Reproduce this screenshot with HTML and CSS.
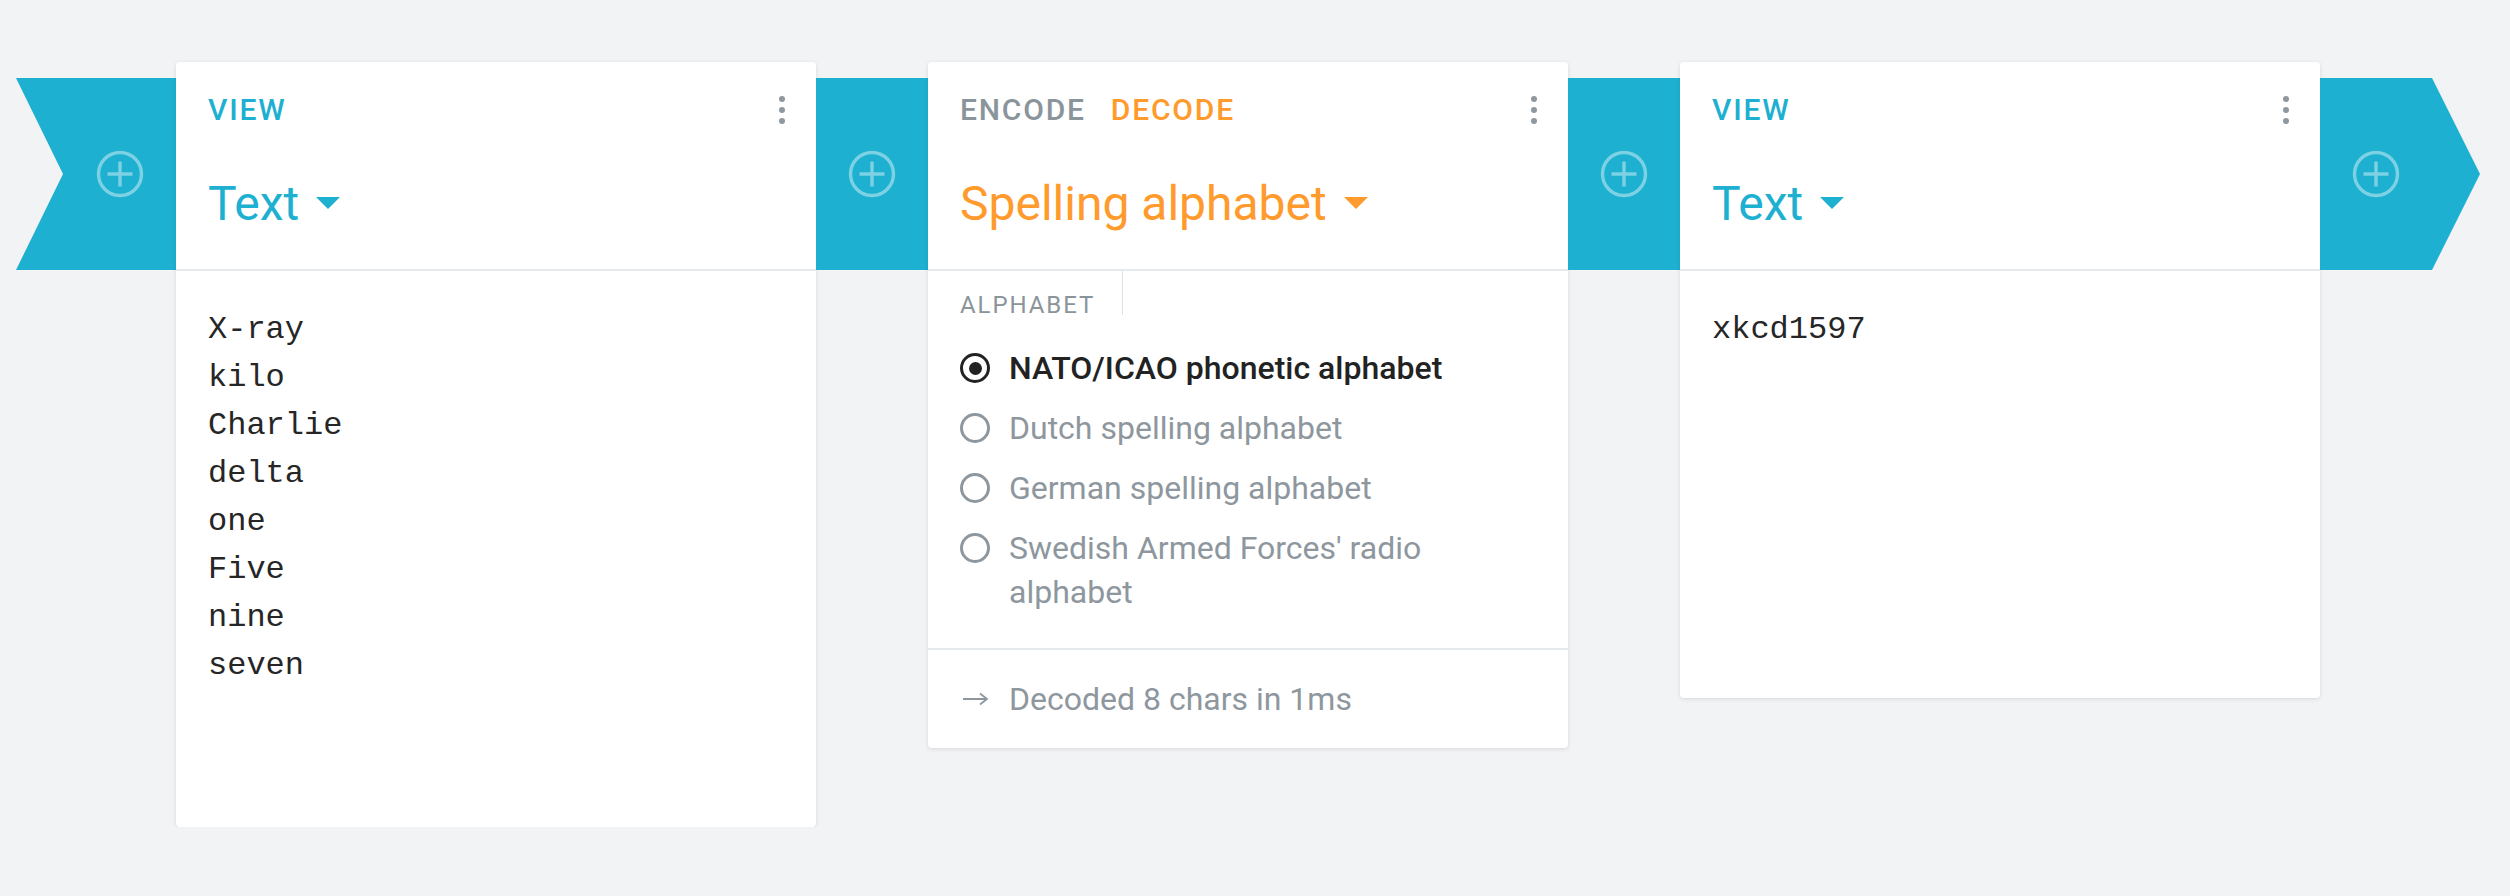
FILE: index.html
```html
<!DOCTYPE html>
<html lang="en">
<head>
<meta charset="utf-8">
<title>Pipe</title>
<link rel="stylesheet" href="styles.css">
</head>
<body>
<div class="pipe">
  <div class="tail"></div>
  <div class="slot">
    <svg class="plus" viewBox="0 0 48 48" width="48" height="48"><circle cx="24" cy="24" r="21.5" fill="none" stroke="currentColor" stroke-width="3.4"/><path d="M24 11.5v25M11.5 24h25" stroke="currentColor" stroke-width="3.4"/></svg>
  </div>

  <section class="brick">
    <header class="brick-header">
      <div class="brick-top">
        <div class="labels"><span class="lbl lbl-view">VIEW</span></div>
        <span class="kebab"><i></i><i></i><i></i></span>
      </div>
      <div class="brick-title title-view"><span>Text</span><span class="caret"></span></div>
    </header>
    <div class="brick-body text-body body-tall">X-ray
kilo
Charlie
delta
one
Five
nine
seven</div>
  </section>

  <div class="slot">
    <svg class="plus" viewBox="0 0 48 48" width="48" height="48"><circle cx="24" cy="24" r="21.5" fill="none" stroke="currentColor" stroke-width="3.4"/><path d="M24 11.5v25M11.5 24h25" stroke="currentColor" stroke-width="3.4"/></svg>
  </div>

  <section class="brick">
    <header class="brick-header">
      <div class="brick-top">
        <div class="labels"><span class="lbl lbl-muted">ENCODE</span><span class="lbl lbl-orange">DECODE</span></div>
        <span class="kebab"><i></i><i></i><i></i></span>
      </div>
      <div class="brick-title title-orange"><span>Spelling alphabet</span><span class="caret"></span></div>
    </header>
    <div class="brick-body settings">
      <div class="field-label">ALPHABET</div>
      <div class="options">
        <div class="option selected"><span class="radio"></span><span class="option-text">NATO/ICAO phonetic alphabet</span></div>
        <div class="option"><span class="radio"></span><span class="option-text">Dutch spelling alphabet</span></div>
        <div class="option"><span class="radio"></span><span class="option-text">German spelling alphabet</span></div>
        <div class="option"><span class="radio"></span><span class="option-text">Swedish Armed Forces' radio alphabet</span></div>
      </div>
    </div>
    <footer class="brick-footer">
      <svg class="arrow" viewBox="0 0 30 16" width="30" height="16"><path d="M3 8h24M20 2.5 27 8l-7 5.5" fill="none" stroke="currentColor" stroke-width="1.8"/></svg>
      <span>Decoded 8 chars in 1ms</span>
    </footer>
  </section>

  <div class="slot">
    <svg class="plus" viewBox="0 0 48 48" width="48" height="48"><circle cx="24" cy="24" r="21.5" fill="none" stroke="currentColor" stroke-width="3.4"/><path d="M24 11.5v25M11.5 24h25" stroke="currentColor" stroke-width="3.4"/></svg>
  </div>

  <section class="brick">
    <header class="brick-header">
      <div class="brick-top">
        <div class="labels"><span class="lbl lbl-view">VIEW</span></div>
        <span class="kebab"><i></i><i></i><i></i></span>
      </div>
      <div class="brick-title title-view"><span>Text</span><span class="caret"></span></div>
    </header>
    <div class="brick-body text-body body-short">xkcd1597</div>
  </section>

  <div class="slot">
    <svg class="plus" viewBox="0 0 48 48" width="48" height="48"><circle cx="24" cy="24" r="21.5" fill="none" stroke="currentColor" stroke-width="3.4"/><path d="M24 11.5v25M11.5 24h25" stroke="currentColor" stroke-width="3.4"/></svg>
  </div>
  <div class="head"></div>
</div>
</body>
</html>
```

FILE: styles.css
```css
* { box-sizing: border-box; }

html, body {
  margin: 0;
  background: #f2f3f5;
  font-family: Roboto, "Noto Sans", "Liberation Sans", sans-serif;
}

.pipe {
  display: flex;
  align-items: flex-start;
  padding: 62px 0 0 16px;
}

.tail, .head, .slot {
  flex: none;
  height: 192px;
  margin-top: 16px;
  background: #1eb0d0;
}

.tail {
  width: 48px;
  clip-path: polygon(0 0, 48px 0, 48px 192px, 0 192px, 47px 96px);
}

.head {
  width: 48px;
  clip-path: polygon(0 0, 48px 96px, 0 192px);
}

.slot {
  width: 112px;
  display: flex;
  align-items: center;
  justify-content: center;
}

.plus {
  display: block;
  color: rgba(255, 255, 255, 0.42);
}

.brick {
  flex: none;
  width: 640px;
  background: #fff;
  border-radius: 4px;
  box-shadow: 0 1px 4px rgba(30, 40, 50, 0.13);
}

.brick-header {
  padding: 26px 32px 33px;
  border-bottom: 2px solid #e6e9ec;
}

.brick-top {
  display: flex;
  align-items: center;
  justify-content: space-between;
  height: 44px;
}

.labels {
  display: flex;
  gap: 25px;
}

.lbl {
  font-size: 30px;
  font-weight: 500;
  letter-spacing: 0.06em;
  line-height: 44px;
}

.lbl-view { color: #1eb0d0; }
.lbl-muted { color: #8a949b; }
.lbl-orange { color: #ff9a2c; }

.kebab {
  display: flex;
  flex-direction: column;
  gap: 5px;
  margin-right: -1px;
}

.kebab i {
  display: block;
  width: 6px;
  height: 6px;
  border-radius: 50%;
  background: #8f989e;
}

.brick-title {
  display: flex;
  align-items: center;
  margin-top: 40px;
  font-size: 48px;
  line-height: 64px;
  font-weight: 400;
}

.title-view { color: #1eb0d0; }
.title-orange { color: #ff9a2c; }

.caret {
  width: 0;
  height: 0;
  margin-left: 17px;
  margin-bottom: 2px;
  border-left: 12px solid transparent;
  border-right: 12px solid transparent;
  border-top: 12px solid currentColor;
}

.text-body {
  padding: 35px 32px 0;
  font-family: "Liberation Mono", "DejaVu Sans Mono", monospace;
  font-size: 32px;
  line-height: 48px;
  color: #262626;
  white-space: pre;
}

.body-tall { height: 556px; }
.body-short { height: 427px; }

.settings {
  padding: 0 32px 26px;
}

.field-label {
  display: block;
  width: fit-content;
  padding: 24px 27px 0 0;
  border-right: 1px solid #dde1e5;
  font-size: 24px;
  line-height: 20px;
  letter-spacing: 0.08em;
  color: #8a949b;
}

.options {
  margin-top: 23px;
}

.option {
  display: flex;
  align-items: flex-start;
  padding: 8px 0;
  font-size: 32px;
  line-height: 44px;
  color: #8e979e;
}

.option-text {
  max-width: 500px;
}

.radio {
  flex: none;
  width: 30px;
  height: 30px;
  margin: 7px 19px 0 0;
  border: 3.5px solid #8e979e;
  border-radius: 50%;
  display: flex;
  align-items: center;
  justify-content: center;
}

.option.selected {
  color: #222;
  font-weight: 500;
}

.option.selected .radio {
  border-color: #222;
}

.option.selected .radio::after {
  content: "";
  width: 13px;
  height: 13px;
  border-radius: 50%;
  background: #222;
}

.brick-footer {
  display: flex;
  align-items: center;
  padding: 27px 32px 27px;
  border-top: 2px solid #e6e9ec;
  font-size: 32px;
  line-height: 44px;
  color: #8e979e;
}

.arrow {
  display: block;
  flex: none;
  margin-right: 19px;
}
```
